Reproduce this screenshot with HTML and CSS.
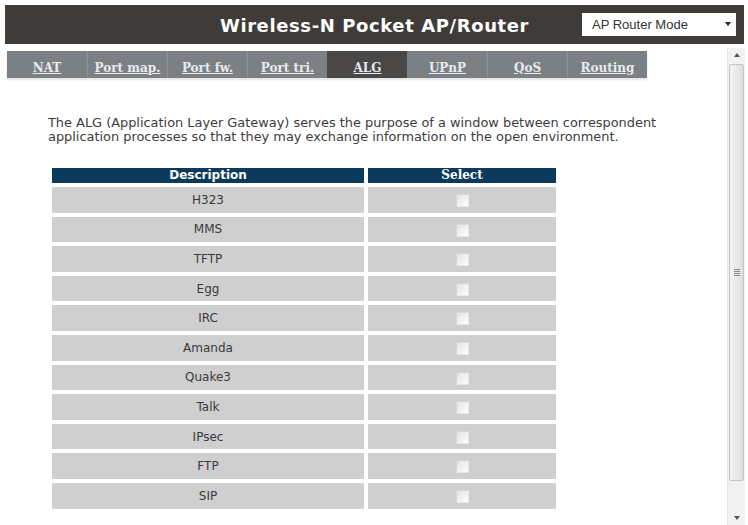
FILE: index.html
```html
<!DOCTYPE html>
<html lang="en">
<head>
  <meta charset="UTF-8" />
  <meta name="viewport" content="width=device-width, initial-scale=1.0"/>
  <title>ALG</title>
  <link rel="stylesheet" href="styles.css">
</head>
<body>

<div class="topbar">
  <div></div>
  <div class="title">Wireless-N Pocket AP/Router</div>
  <div class="mode">
    <div class="mode-select">
      <span>AP Router Mode</span>
      <span class="caret"></span>
    </div>
  </div>
</div>

<div class="frame">
  <div class="content">
    <!-- Advanced settings tabs -->
    <div class="tabs">
      <a class="tab" href="#">NAT</a>
      <a class="tab" href="#">Port map.</a>
      <a class="tab" href="#">Port fw.</a>
      <a class="tab" href="#">Port tri.</a>
      <a class="tab active" href="#">ALG</a>
      <a class="tab" href="#">UPnP</a>
      <a class="tab" href="#">QoS</a>
      <a class="tab" href="#">Routing</a>
    </div>

    <p class="intro">The ALG (Application Layer Gateway) serves the purpose of a window between correspondent application processes so that they may exchange information on the open environment.</p>

    <table class="alg-table">
      <thead>
        <tr>
          <th class="col-desc">Description</th>
          <th class="col-select">Select</th>
        </tr>
      </thead>
      <tbody>
        <tr><td>H323</td><td><span class="check"></span></td></tr>
        <tr><td>MMS</td><td><span class="check"></span></td></tr>
        <tr><td>TFTP</td><td><span class="check"></span></td></tr>
        <tr><td>Egg</td><td><span class="check"></span></td></tr>
        <tr><td>IRC</td><td><span class="check"></span></td></tr>
        <tr><td>Amanda</td><td><span class="check"></span></td></tr>
        <tr><td>Quake3</td><td><span class="check"></span></td></tr>
        <tr><td>Talk</td><td><span class="check"></span></td></tr>
        <tr><td>IPsec</td><td><span class="check"></span></td></tr>
        <tr><td>FTP</td><td><span class="check"></span></td></tr>
        <tr><td>SIP</td><td><span class="check"></span></td></tr>
      </tbody>
    </table>
  </div>

  <!-- frame scrollbar -->
  <div class="scrollbar">
    <div class="arrow up"></div>
    <div class="track">
      <div class="thumb"><span class="grip"></span></div>
    </div>
    <div class="arrow down"></div>
  </div>
</div>

</body>
</html>
```

FILE: styles.css
```css
html, body {
  margin: 0;
  padding: 0;
  background: #fff;
  height: 100%;
  overflow: hidden;
}

body {
  font-family: "DejaVu Sans", Verdana, sans-serif;
  color: #3a3a3a;
}

.topbar {
  display: grid;
  grid-template-columns: 1fr auto 1fr;
  align-items: center;
  height: 39px;
  margin: 5px 4px 0 5px;
  background-color: #3f3b39;
}

.title {
  font-family: "DejaVu Sans", Verdana, sans-serif;
  font-weight: bold;
  font-size: 18px;
  letter-spacing: 0.6px;
  color: #fff;
  padding-top: 1px;
}

.mode {
  display: flex;
  justify-content: flex-end;
  padding-right: 8px;
}

.mode-select {
  display: flex;
  align-items: center;
  justify-content: space-between;
  width: 139px;
  height: 23px;
  padding: 0 5px 0 10px;
  margin-top: -1px;
  background: #fff;
  font-family: "Liberation Sans", Arial, sans-serif;
  font-size: 13px;
  color: #333;
}

.caret {
  width: 0;
  height: 0;
  border-left: 3px solid transparent;
  border-right: 3px solid transparent;
  border-top: 4px solid #222;
}

.frame {
  display: flex;
  margin-top: 4px;
  height: 477px;
}

.content {
  flex: 1;
}

.tabs {
  display: flex;
  width: 640px;
  height: 27px;
  margin: 3px 0 0 7px;
  background-color: #7b8084;
  box-shadow: 0 2px 2px #e4e4e4;
}

.tab {
  flex: 0 0 80px;
  display: flex;
  align-items: center;
  justify-content: center;
  padding-top: 6px;
  box-sizing: border-box;
  border-left: 1px solid #8d9296;
  font-family: "DejaVu Serif", Georgia, serif;
  font-weight: bold;
  font-size: 12px;
  color: #e6ebf0;
  text-decoration: underline;
}

.tab:first-child {
  border-left: none;
}

.tab.active {
  background-color: #4a4847;
  border-left-color: #4a4847;
}

.tab.active + .tab {
  border-left-color: #7b8084;
}

.intro {
  width: 640px;
  margin: 38px 0 0 48px;
  font-size: 12.9px;
  line-height: 14px;
  color: #3c3c3c;
}

.alg-table {
  margin: 20px 0 0 48px;
  border-spacing: 4px;
  font-size: 12px;
}

.alg-table th {
  height: 15px;
  padding: 0;
  background-color: #0c3a5b;
  color: #fff;
  font-weight: bold;
  line-height: 15px;
}

.col-desc {
  width: 312px;
}

.col-select {
  width: 188px;
  font-family: "DejaVu Serif", Georgia, serif;
}

.alg-table td {
  height: 25.6px;
  padding: 0;
  background-color: #cfcfcf;
  text-align: center;
  color: #3a3a3a;
}

.check {
  display: inline-block;
  width: 11px;
  height: 11px;
  margin-top: 1px;
  border: 1px solid #d6d6d6;
  border-right-color: #e8e8e8;
  border-bottom-color: #e8e8e8;
  background: linear-gradient(135deg, #e2e2e2, #ffffff);
  vertical-align: middle;
}

.scrollbar {
  display: flex;
  flex-direction: column;
  width: 17px;
  margin-right: 3px;
  background-color: #f2f2f2;
  border-left: 1px solid #e6e6e6;
}

.arrow {
  height: 14px;
  display: flex;
  align-items: center;
  justify-content: center;
}

.arrow::before {
  content: "";
  border-left: 3px solid transparent;
  border-right: 3px solid transparent;
}

.arrow.up::before {
  border-bottom: 4px solid #555;
}

.arrow.down::before {
  border-top: 4px solid #555;
}

.track {
  flex: 1;
  padding: 2px 1px 30px;
}

.thumb {
  display: flex;
  align-items: center;
  justify-content: center;
  height: 100%;
  box-sizing: border-box;
  border: 1px solid #c4c4c4;
  border-radius: 2px;
  background: linear-gradient(90deg, #f4f4f4, #dedede);
}

.grip {
  width: 6px;
  height: 7px;
  background: repeating-linear-gradient(#888 0 1px, transparent 1px 2px);
}
```
